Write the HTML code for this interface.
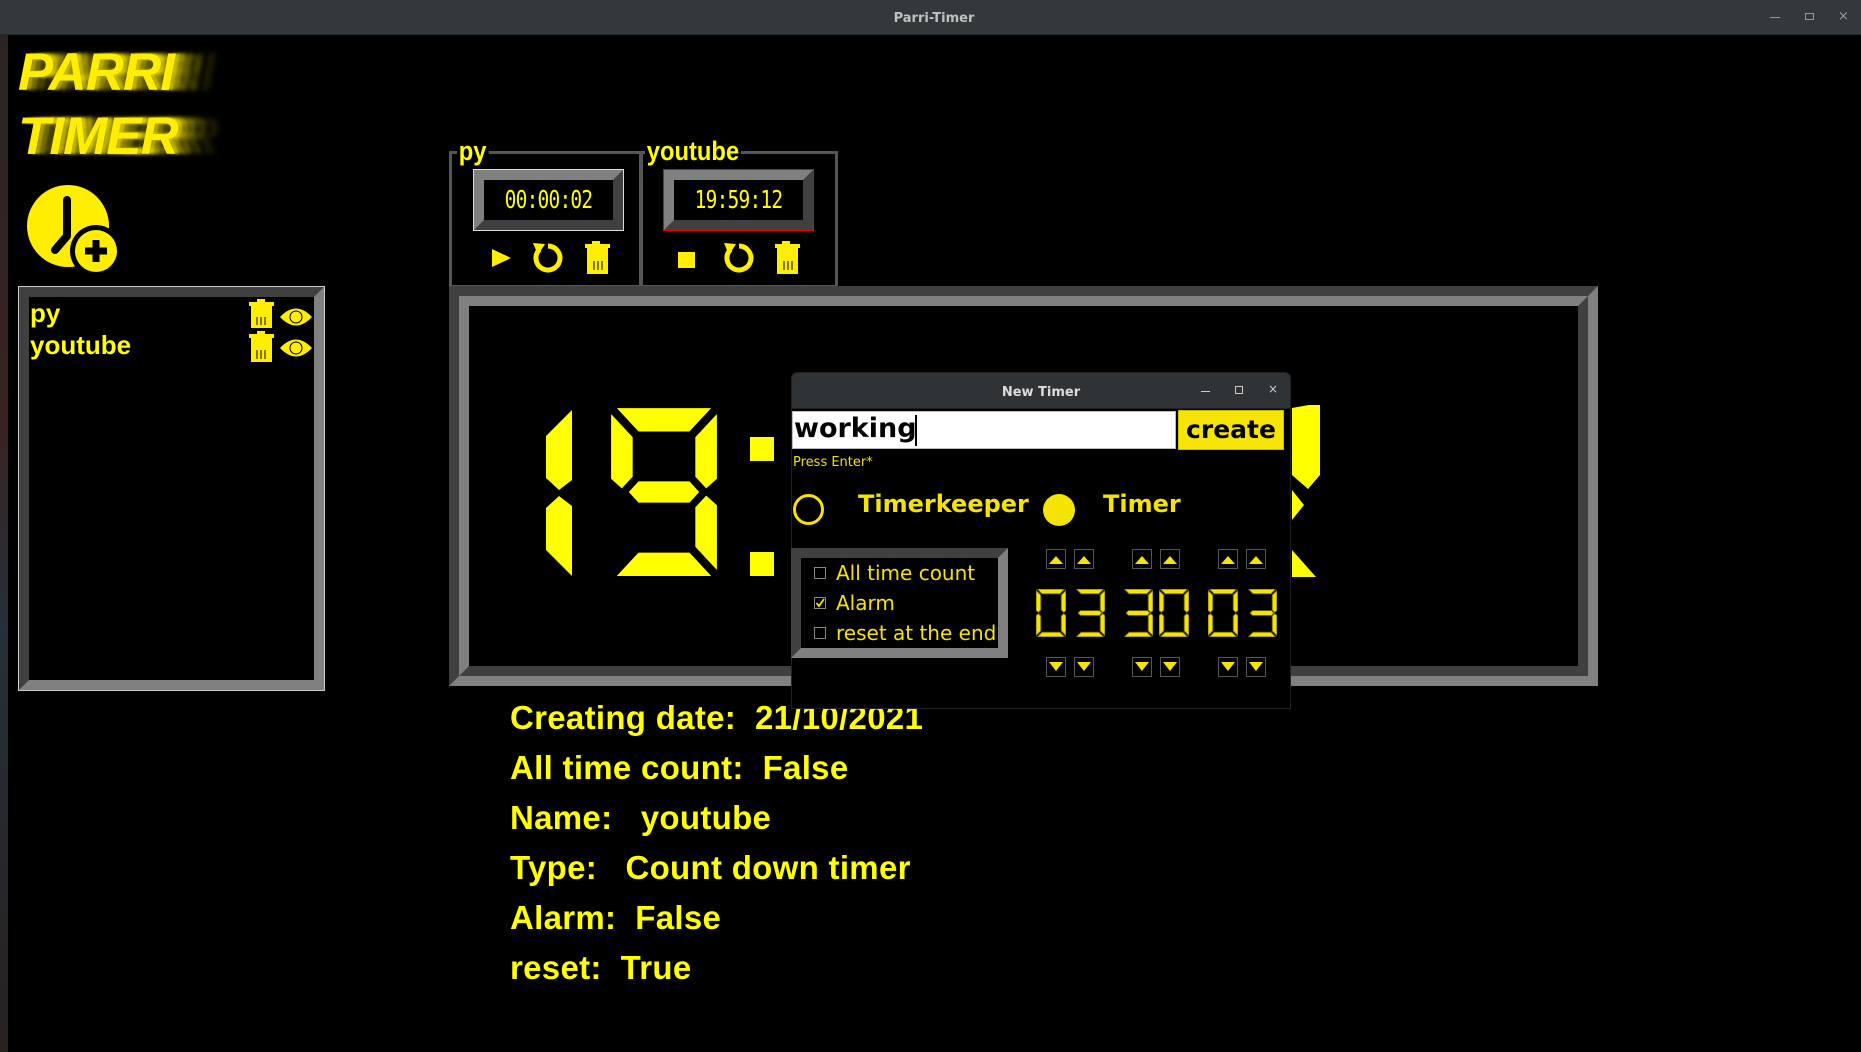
<!DOCTYPE html>
<html><head><meta charset="utf-8"><style>
*{margin:0;padding:0;box-sizing:border-box}
body{width:1861px;height:1052px;background:#000;position:relative;overflow:hidden;font-family:"Liberation Sans",sans-serif}
.a{position:absolute}
.y{color:#ffff00}
.bev{position:absolute;border-style:solid;border-width:10px;border-color:#404040 #808080 #808080 #404040;background:#000}
.logo{position:absolute;left:18px;font:italic 900 53px 'Liberation Sans',sans-serif;color:#ffee00;letter-spacing:-1px;text-shadow:4px 0 2px rgba(255,238,0,.6),10px 0 3px rgba(255,238,0,.45),18px 0 4px rgba(255,238,0,.3),28px 0 5px rgba(255,238,0,.2),40px 0 6px rgba(255,238,0,.12)}
</style></head><body>
<div class="a" style="left:0;top:0;width:8px;height:1052px;background:linear-gradient(#2b2424,#3a2222 40%,#23303a 60%,#2a2020)"></div>
<div class="a" style="left:0;top:0;width:1861px;height:35px;background:#33383b;border-bottom:1px solid #26292b"></div>
<div class="a" style="left:0;top:11px;width:1868px;text-align:center;color:#bfc2c2;font:bold 13px 'DejaVu Sans',sans-serif">Parri-Timer</div>
<div class="a" style="left:1770px;top:17px;width:10px;height:1px;background:#999"></div>
<div class="a" style="left:1805px;top:13px;width:9px;height:7px;border:1px solid #999"></div>
<div class="a" style="left:1838px;top:9px;color:#999;font:13px 'DejaVu Sans',sans-serif">×</div>

<div class="logo" style="top:42px">PARRI</div>
<div class="logo" style="top:106px">TIMER</div>

<svg class="a" style="left:20px;top:180px" width="110" height="100" viewBox="20 180 110 100">
<circle cx="68" cy="226" r="41" fill="#ffee00"/>
<path d="M67 200 L67 236 L55 250" stroke="#000" stroke-width="8" fill="none" stroke-linecap="round" stroke-linejoin="round"/>
<circle cx="96" cy="251" r="26" fill="#000"/>
<circle cx="96" cy="251" r="21" fill="#ffee00"/>
<path d="M96 240 V262 M85 251 H107" stroke="#000" stroke-width="7"/>
</svg>

<div class="a" style="left:18px;top:286px;width:307px;height:405px;border:1px solid #ccc"></div>
<div class="bev" style="left:19px;top:287px;width:305px;height:403px"></div>
<div class="a y" style="left:30px;top:298px;font:bold 26px 'Liberation Sans',sans-serif">py</div>
<div class="a y" style="left:30px;top:330px;font:bold 26px 'Liberation Sans',sans-serif">youtube</div>
<svg class="a" style="left:248px;top:298px" width="68" height="68" viewBox="0 0 68 68">
<g fill="#ffee00"><rect x="9" y="1" width="8" height="3"/><rect x="1" y="4" width="25" height="4"/><rect x="3" y="8" width="21" height="22"/></g>
<g stroke="#000" stroke-width="1"><path d="M9 19v8M13 19v8M17 19v8"/></g>
<g fill="#ffee00"><rect x="9" y="33" width="8" height="3"/><rect x="1" y="36" width="25" height="4"/><rect x="3" y="40" width="21" height="24"/></g>
<g stroke="#000" stroke-width="1"><path d="M9 52v9M13 52v9M17 52v9"/></g>
<path d="M32 19 Q48 2 64 19 Q48 36 32 19Z" fill="#ffee00"/><circle cx="48" cy="19" r="6" fill="none" stroke="#000"/>
<path d="M32 50 Q48 33 64 50 Q48 67 32 50Z" fill="#ffee00"/><circle cx="48" cy="50" r="6" fill="none" stroke="#000"/>
</svg>

<div class="a" style="left:449px;top:151px;width:193px;height:137px;border:3px solid #555"></div>
<div class="a" style="left:640px;top:151px;width:198px;height:137px;border:3px solid #555"></div>
<div class="a y" style="left:457px;top:136px;background:#000;padding:0 2px;font:bold 27px 'Liberation Sans',sans-serif;transform:scaleX(.88);transform-origin:left">py</div>
<div class="a y" style="left:645px;top:136px;background:#000;padding:0 2px;font:bold 27px 'Liberation Sans',sans-serif;transform:scaleX(.88);transform-origin:left">youtube</div>
<div class="a" style="left:473px;top:169px;width:151px;height:62px;border:1px solid #ddd"></div>
<div class="bev" style="left:474px;top:170px;width:149px;height:60px;border-color:#808080 #404040 #404040 #808080"></div>
<div class="a y" style="left:474px;top:185px;width:149px;text-align:center;font:25px 'DejaVu Sans Mono',monospace;transform:scaleX(.78);letter-spacing:-1px">00:00:02</div>
<div class="a" style="left:663px;top:169px;width:151px;height:62px;border:1px solid #e00"></div>
<div class="bev" style="left:664px;top:170px;width:149px;height:60px;border-color:#808080 #404040 #404040 #808080"></div>
<div class="a y" style="left:664px;top:185px;width:149px;text-align:center;font:25px 'DejaVu Sans Mono',monospace;transform:scaleX(.78);letter-spacing:-1px">19:59:12</div>
<svg class="a" style="left:480px;top:238px" width="340" height="40" viewBox="480 238 340 40">
<g fill="#ffee00">
<path d="M492 249 L511 258 L492 267Z"/>
<rect x="592" y="241" width="8" height="3"/><rect x="585" y="244" width="25" height="4"/><rect x="587" y="248" width="21" height="26"/>
<rect x="678" y="252" width="17" height="16"/>
<rect x="782" y="241" width="8" height="3"/><rect x="775" y="244" width="25" height="4"/><rect x="777" y="248" width="21" height="26"/>
</g>
<g stroke="#000" stroke-width="1"><path d="M594 261v9M598 261v9M602 261v9M784 261v9M788 261v9M792 261v9"/></g>
<g fill="none" stroke="#ffee00" stroke-width="5">
<path d="M548 246 A12 12 0 1 1 539.5 249.5"/>
<path d="M739 246 A12 12 0 1 1 730.5 249.5"/>
</g>
<path d="M533 243 L545 244 L538 255Z M724 243 L736 244 L729 255Z" fill="#ffee00"/>
</svg>

<svg class="a" style="left:449px;top:286px" width="1149" height="400"><path d="M0 0H1149L1129 20H20Z" fill="#404040"/><path d="M0 0L20 20V380L0 400Z" fill="#404040"/><path d="M1149 0V400L1129 380V20Z" fill="#808080"/><path d="M0 400L20 380H1129L1149 400Z" fill="#808080"/><rect x="20" y="20" width="1109" height="360" fill="#000"/></svg>
<div class="a" style="left:459px;top:296px;width:1129px;height:380px;border-style:solid;border-width:10px;border-color:#808080 #404040 #404040 #808080"></div>
<div class="a" style="left:449px;top:286px;width:1149px;height:400px;border-style:solid;border-width:10px;border-color:#404040 #808080 #808080 #404040"></div>

<svg class="a" style="left:546px;top:410px" width="26" height="166" viewBox="0 0 26 166" preserveAspectRatio="none">
<g fill="#ffff00"><path d="M26 0 V70 L13 80 L0 68 V26Z"/><path d="M26 96 V166 L0 140 V98 L13 86Z"/></g></svg>
<svg class="a" style="left:610px;top:407px" width="108" height="170" viewBox="0 0 100 160" preserveAspectRatio="none">
<g fill="#ffff00" stroke="#000" stroke-width="2">
<path d="M4 0H96L74 24H26Z"/>
<path d="M0 4L22 28V66L11 78L0 68Z"/>
<path d="M100 4V68L89 78L78 66V28Z"/>
<path d="M26 69H74L84 80L74 91H26L16 80Z"/>
<path d="M100 92V156L78 132V94L89 82Z"/>
<path d="M26 136H74L96 160H4Z"/>
</g></svg>
<div class="a" style="left:750px;top:437px;width:24px;height:24px;background:#ffff00"></div>
<div class="a" style="left:750px;top:552px;width:24px;height:24px;background:#ffff00"></div>
<svg class="a" style="left:1288px;top:405px" width="40" height="175"><g fill="#ffff00"><path d="M4 3L32 -2V70L20 84L4 70Z"/><path d="M4 85L16 100L4 115Z"/><path d="M4 145L28 172H4Z"/></g></svg>

<div class="a y" style="left:510px;top:693px;font:bold 33px 'Liberation Sans',sans-serif;line-height:50px;white-space:pre;letter-spacing:0.3px">Creating date:  21/10/2021
All time count:  False
Name:   youtube
Type:   Count down timer
Alarm:  False
reset:  True</div>

<div class="a" style="left:791px;top:372px;width:500px;height:337px;background:#000;border:1px solid #222;border-radius:6px 6px 0 0;overflow:hidden">
  <div style="height:36px;background:#2f3336;border-bottom:1px solid #1c1e20"></div>
</div>
<div class="a" style="left:791px;top:385px;width:500px;text-align:center;color:#dcdcdc;font:bold 13px 'DejaVu Sans',sans-serif">New Timer</div>
<div class="a" style="left:1201px;top:391px;width:9px;height:1px;background:#ccc"></div>
<div class="a" style="left:1235px;top:386px;width:8px;height:8px;border:1px solid #ccc"></div>
<div class="a" style="left:1268px;top:382px;color:#ccc;font:12px 'DejaVu Sans',sans-serif">×</div>

<div class="a" style="left:792px;top:411px;width:384px;height:38px;background:#fff;border:1px solid #bbb"></div>
<div class="a" style="left:794px;top:413px;color:#000;font:bold 27px 'DejaVu Sans',sans-serif">working</div>
<div class="a" style="left:915px;top:415px;width:2px;height:31px;background:#000"></div>
<div class="a" style="left:1178px;top:410px;width:106px;height:40px;background:#f6e500;border:1px solid #c9bb00"></div>
<div class="a" style="left:1178px;top:415px;width:106px;text-align:center;color:#000;font:bold 25px 'DejaVu Sans',sans-serif">create</div>
<div class="a" style="left:793px;top:455px;color:#f0e000;font:13px 'DejaVu Sans',sans-serif">Press Enter*</div>

<div class="a" style="left:793px;top:494px;width:31px;height:31px;border:3px solid #f5e300;border-radius:50%"></div>
<div class="a" style="left:858px;top:490px;color:#f5e300;font:bold 24px 'DejaVu Sans',sans-serif">Timerkeeper</div>
<div class="a" style="left:1043px;top:494px;width:32px;height:32px;background:#f5e300;border-radius:50%"></div>
<div class="a" style="left:1103px;top:490px;color:#f5e300;font:bold 24px 'DejaVu Sans',sans-serif">Timer</div>

<div class="bev" style="left:791px;top:548px;width:217px;height:110px"></div>
<svg class="a" style="left:812px;top:563px" width="16" height="80">
<g fill="none" stroke="#888"><rect x="2.5" y="4.5" width="11" height="11"/><rect x="2.5" y="34.5" width="11" height="11"/><rect x="2.5" y="64.5" width="11" height="11"/></g>
<path d="M4.5 40 L7 43 L12 36" stroke="#f5e300" stroke-width="1.8" fill="none"/>
</svg>
<div class="a" style="left:836px;top:558px;color:#f5e300;font:20px 'DejaVu Sans',sans-serif;line-height:30px">All time count<br>Alarm<br>reset at the end</div>

<svg class="a" style="left:1040px;top:545px" width="240" height="140" viewBox="1040 545 240 140">
<g fill="#000" stroke="#555" stroke-width="1">
<rect x="1046.5" y="549.5" width="19" height="19"/><rect x="1074.5" y="549.5" width="19" height="19"/>
<rect x="1132.5" y="549.5" width="19" height="19"/><rect x="1160.5" y="549.5" width="19" height="19"/>
<rect x="1218.5" y="549.5" width="19" height="19"/><rect x="1246.5" y="549.5" width="19" height="19"/>
<rect x="1046.5" y="657.5" width="19" height="19"/><rect x="1074.5" y="657.5" width="19" height="19"/>
<rect x="1132.5" y="657.5" width="19" height="19"/><rect x="1160.5" y="657.5" width="19" height="19"/>
<rect x="1218.5" y="657.5" width="19" height="19"/><rect x="1246.5" y="657.5" width="19" height="19"/>
</g>
<g fill="#f5e300">
<path d="M1049 564L1056 556L1063 564Z M1077 564L1084 556L1091 564Z M1135 564L1142 556L1149 564Z M1163 564L1170 556L1177 564Z M1221 564L1228 556L1235 564Z M1249 564L1256 556L1263 564Z"/>
<path d="M1049 662L1056 671L1063 662Z M1077 662L1084 671L1091 662Z M1135 662L1142 671L1149 662Z M1163 662L1170 671L1177 662Z M1221 662L1228 671L1235 662Z M1249 662L1256 671L1263 662Z"/>
</g>
</svg>

<svg class="a" style="left:1036px;top:589px" width="30" height="48" viewBox="0 0 100 160" preserveAspectRatio="none"><g fill="#f5e300" stroke="#6a6400" stroke-width="3"><path d="M4 0H96L80 16H20Z"/><path d="M0 4L16 20V70L8 78L0 72Z"/><path d="M100 4V72L92 78L84 70V20Z"/><path d="M0 88L8 82L16 90V140L0 156Z"/><path d="M100 88V156L84 140V90L92 82Z"/><path d="M20 144H80L96 160H4Z"/></g></svg>
<svg class="a" style="left:1075px;top:589px" width="30" height="48" viewBox="0 0 100 160" preserveAspectRatio="none"><g fill="#f5e300" stroke="#6a6400" stroke-width="3"><path d="M4 0H96L80 16H20Z"/><path d="M100 4V72L92 78L84 70V20Z"/><path d="M18 72H82L90 80L82 88H18L10 80Z"/><path d="M100 88V156L84 140V90L92 82Z"/><path d="M20 144H80L96 160H4Z"/></g></svg>
<svg class="a" style="left:1123px;top:589px" width="30" height="48" viewBox="0 0 100 160" preserveAspectRatio="none"><g fill="#f5e300" stroke="#6a6400" stroke-width="3"><path d="M4 0H96L80 16H20Z"/><path d="M100 4V72L92 78L84 70V20Z"/><path d="M18 72H82L90 80L82 88H18L10 80Z"/><path d="M100 88V156L84 140V90L92 82Z"/><path d="M20 144H80L96 160H4Z"/></g></svg>
<svg class="a" style="left:1159px;top:589px" width="30" height="48" viewBox="0 0 100 160" preserveAspectRatio="none"><g fill="#f5e300" stroke="#6a6400" stroke-width="3"><path d="M4 0H96L80 16H20Z"/><path d="M0 4L16 20V70L8 78L0 72Z"/><path d="M100 4V72L92 78L84 70V20Z"/><path d="M0 88L8 82L16 90V140L0 156Z"/><path d="M100 88V156L84 140V90L92 82Z"/><path d="M20 144H80L96 160H4Z"/></g></svg>
<svg class="a" style="left:1208px;top:589px" width="30" height="48" viewBox="0 0 100 160" preserveAspectRatio="none"><g fill="#f5e300" stroke="#6a6400" stroke-width="3"><path d="M4 0H96L80 16H20Z"/><path d="M0 4L16 20V70L8 78L0 72Z"/><path d="M100 4V72L92 78L84 70V20Z"/><path d="M0 88L8 82L16 90V140L0 156Z"/><path d="M100 88V156L84 140V90L92 82Z"/><path d="M20 144H80L96 160H4Z"/></g></svg>
<svg class="a" style="left:1247px;top:589px" width="30" height="48" viewBox="0 0 100 160" preserveAspectRatio="none"><g fill="#f5e300" stroke="#6a6400" stroke-width="3"><path d="M4 0H96L80 16H20Z"/><path d="M100 4V72L92 78L84 70V20Z"/><path d="M18 72H82L90 80L82 88H18L10 80Z"/><path d="M100 88V156L84 140V90L92 82Z"/><path d="M20 144H80L96 160H4Z"/></g></svg>
</body></html>
